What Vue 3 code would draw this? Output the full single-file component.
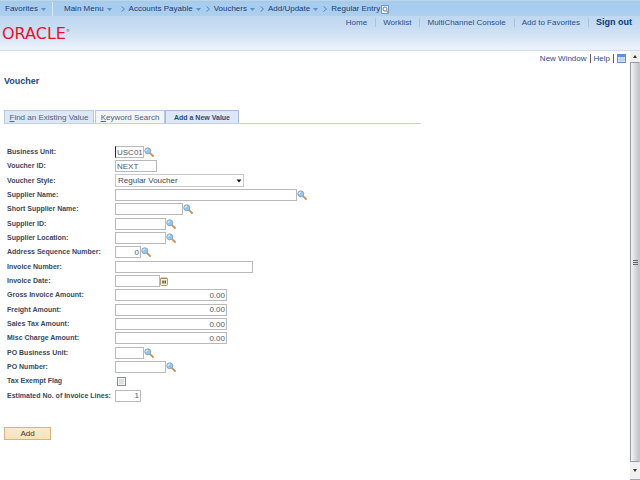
<script setup>
import { ref } from 'vue'

const crumbs = [
  { text: 'Accounts Payable', menu: true },
  { text: 'Vouchers', menu: true },
  { text: 'Add/Update', menu: true },
  { text: 'Regular Entry', menu: false },
]

const links = ['Home', 'Worklist', 'MultiChannel Console', 'Add to Favorites']

const fields = ref([
  { id: 'business-unit', label: 'Business Unit:', size: 'w-unit', value: 'USC01', lookup: true, caret: true },
  { id: 'voucher-id', label: 'Voucher ID:', size: 'w-voucher', value: 'NEXT' },
  { id: 'voucher-style', label: 'Voucher Style:', kind: 'select', value: 'Regular Voucher' },
  { id: 'supplier-name', label: 'Supplier Name:', size: 'w-name', value: '', lookup: true },
  { id: 'short-name', label: 'Short Supplier Name:', size: 'w-short', value: '', lookup: true },
  { id: 'supplier-id', label: 'Supplier ID:', size: 'w-code', value: '', lookup: true },
  { id: 'supplier-location', label: 'Supplier Location:', size: 'w-code', value: '', lookup: true },
  { id: 'address-seq', label: 'Address Sequence Number:', size: 'w-count', value: '0', right: true, lookup: true },
  { id: 'invoice-number', label: 'Invoice Number:', size: 'w-invoice', value: '' },
  { id: 'invoice-date', label: 'Invoice Date:', size: 'w-date', value: '', calendar: true },
  { id: 'gross', label: 'Gross Invoice Amount:', size: 'w-amount', value: '0.00', right: true },
  { id: 'freight', label: 'Freight Amount:', size: 'w-amount', value: '0.00', right: true },
  { id: 'sales-tax', label: 'Sales Tax Amount:', size: 'w-amount', value: '0.00', right: true },
  { id: 'misc', label: 'Misc Charge Amount:', size: 'w-amount', value: '0.00', right: true },
  { id: 'po-unit', label: 'PO Business Unit:', size: 'w-unit', value: '', lookup: true },
  { id: 'po-number', label: 'PO Number:', size: 'w-code', value: '', lookup: true },
  { id: 'tax-exempt', label: 'Tax Exempt Flag', kind: 'checkbox', value: false },
  { id: 'line-count', label: 'Estimated No. of Invoice Lines:', size: 'w-count', value: '1', right: true },
])
</script>

<template>
  <div class="page">
    <header class="header">
      <nav class="crumbs" aria-label="Breadcrumb">
        <button class="crumb favorites" type="button">
          Favorites
          <svg class="down" viewBox="0 0 5 5"><path d="M0 1h5L2.500 4z" /></svg>
        </button>
        <button class="crumb main-menu" type="button">
          Main Menu
          <svg class="down" viewBox="0 0 5 5"><path d="M0 1h5L2.500 4z" /></svg>
        </button>
        <template v-for="c in crumbs" :key="c.text">
          <svg class="chevron" viewBox="0 0 4 6"><path d="M0.500 0.500L3.500 3L0.500 5.500" /></svg>
          <button class="crumb" :class="{ last: !c.menu }" type="button">
            {{ c.text }}
            <svg v-if="c.menu" class="down" viewBox="0 0 5 5"><path d="M0 1h5L2.500 4z" /></svg>
            <svg v-else class="page-icon" viewBox="0 0 8 9">
              <rect x="0.500" y="0.500" width="7" height="8" fill="#eaf2fc" stroke="#6d9bd3" />
              <circle cx="4" cy="4" r="2" fill="#fff" stroke="#6483ad" />
              <path d="M5.500 5.500L7.500 8" stroke="#d79a24" stroke-width="1.500" />
            </svg>
          </button>
        </template>
      </nav>
      <div class="brand-row">
        <div class="brand">ORACLE<span class="mark">®</span></div>
        <nav class="links" aria-label="Account">
          <a v-for="l in links" :key="l" href="#">{{ l }}</a>
          <a class="sign-out" href="#">Sign out</a>
        </nav>
      </div>
    </header>

    <div class="body">
      <main class="content">
        <div class="tools">
          <a href="#">New Window</a><i class="bar"></i>
          <a href="#">Help</a><i class="bar"></i>
          <button class="icon-button" type="button" aria-label="Personalize page">
            <svg class="grid-icon" viewBox="0 0 9 9">
              <rect x="0.500" y="0.500" width="8" height="8" fill="#d5e4fb" stroke="#6591dc" />
              <path d="M0 0h9v3H0z" fill="#5f8fe2" />
              <path d="M1 5.500h7M3.500 3v5M6 3v5" stroke="#b4cbf2" />
            </svg>
          </button>
        </div>

        <h1>Voucher</h1>

        <div class="tabs">
          <button class="tab first" type="button"><span><u>F</u>ind an Existing Value</span></button>
          <button class="tab plain" type="button"><span><u>K</u>eyword Search</span></button>
          <button class="tab active" type="button">Add a New Value</button>
        </div>

        <form @submit.prevent>
          <div class="fields">
            <div v-for="f in fields" :key="f.id" class="row">
              <label :for="f.id">{{ f.label }}</label>
              <div v-if="f.kind === 'select'" class="select-box">
                <select :id="f.id" v-model="f.value"><option>Regular Voucher</option></select>
                <svg class="arrow" viewBox="0 0 6 4"><path d="M0.500 0.500h5L3 3.500z" /></svg>
              </div>
              <input v-else-if="f.kind === 'checkbox'" :id="f.id" v-model="f.value" type="checkbox" />
              <input
                v-else
                :id="f.id"
                v-model="f.value"
                type="text"
                :class="[f.size, { right: f.right, caret: f.caret }]"
              />
              <button v-if="f.lookup" class="icon-button" type="button" :aria-label="'Look up ' + f.label">
                <svg class="lens" viewBox="0 0 10 10">
                  <path d="M5.800 5.800L9 9" stroke="#cf8f55" stroke-width="1.800" stroke-linecap="round" />
                  <circle cx="3.800" cy="3.800" r="3" fill="#8fc8f4" stroke="#93a3ba" />
                  <path d="M2 4a2 2 0 0 1 2-2" stroke="#e6f6ff" fill="none" />
                </svg>
              </button>
              <button v-if="f.calendar" class="icon-button" type="button" aria-label="Choose a date">
                <svg class="calendar" viewBox="0 0 8 9">
                  <rect x="0.500" y="1" width="7" height="7.500" rx="1" fill="#fbf0d0" stroke="#b39a74" />
                  <path d="M1 1.500h6" stroke="#a68a62" />
                  <path d="M3 3.500v3M5.200 3.500v3" stroke="#3c3024" stroke-width="1.200" />
                </svg>
              </button>
            </div>
          </div>
          <button class="add" type="submit">Add</button>
        </form>
      </main>

      <div class="scrollbar" aria-hidden="true">
        <div class="cap"><svg viewBox="0 0 4 3"><path d="M0 3h4L2 0z" /></svg></div>
        <div class="thumb"><i></i><i></i><i></i></div>
        <div class="cap end"><svg viewBox="0 0 4 3"><path d="M0 0h4L2 3z" /></svg></div>
      </div>
    </div>
  </div>
</template>

<style>
body {
  margin: 0;
  background: #fff;
}
</style>

<style scoped>
.page {
  display: flex;
  flex-direction: column;
  min-height: 100vh;
  font-family: "Liberation Sans", Arial, sans-serif;
  font-size: 8px;
  line-height: 10px;
  color: #1f4f8c;
}
.page * {
  box-sizing: border-box;
}
button,
input,
select {
  margin: 0;
  font: inherit;
  color: inherit;
}
button {
  display: flex;
  align-items: center;
  padding: 0;
  border: 0;
  background: none;
  white-space: nowrap;
}
a {
  color: inherit;
  text-decoration: none;
}
svg {
  display: block;
  flex: none;
  fill: none;
}
.header {
  height: 51px;
  background: linear-gradient(#bfd8f0 16px, #c9ddf2 28px, #d8e5f6 38px, #e6f0fa 46px, #eaf2fb);
  border-bottom: 1px solid #d4dce9;
}
.crumbs {
  display: flex;
  align-items: center;
  height: 16px;
  padding-top: 1px;
  color: #1e3c69;
  background: linear-gradient(#a9cae3, #a7cdf0 3px, #a9cdf1 10px, #b0d0e8);
  border-top: 1px solid #b9d6ec;
}
.crumb {
  gap: 3px;
  height: 14px;
}
.favorites {
  width: 53px;
  padding-left: 5px;
  border-right: 1px solid #d6e7f7;
}
.main-menu {
  padding: 0 4px 0 11px;
}
.last {
  gap: 1px;
}
.down {
  width: 5px;
  height: 5px;
  fill: #5c8fc4;
}
.chevron {
  width: 4px;
  height: 6px;
  margin: 0 4px 0 5px;
  stroke: #5c85b2;
}
.page-icon {
  width: 8px;
  height: 9px;
}
.brand-row {
  display: flex;
  justify-content: space-between;
  align-items: flex-start;
}
.brand {
  display: flex;
  align-items: flex-start;
  padding: 10px 0 0 2px;
  font-family: "DejaVu Sans", sans-serif;
  font-size: 16px;
  line-height: 16px;
  color: #e8112d;
}
.mark {
  font-size: 4px;
  line-height: 10px;
}
.links {
  display: flex;
  padding: 1px 8px 0 0;
}
.links a {
  padding-right: 8px;
  margin-right: 7px;
  border-right: 1px solid #a9c3df;
  line-height: 9px;
  margin-top: 1px;
}
.links .sign-out {
  margin-right: 0;
  padding-right: 0;
  border: 0;
  font-size: 9px;
  font-weight: bold;
  color: #003c80;
}
.body {
  display: flex;
  flex: 1;
}
.content {
  flex: 1;
  padding: 2px 4px 0;
}
.tools {
  display: flex;
  justify-content: flex-end;
  align-items: center;
  gap: 3px;
  height: 11px;
}
.bar {
  width: 1px;
  height: 9px;
  background: #6b5a55;
}
.grid-icon {
  width: 9px;
  height: 9px;
}
h1 {
  margin: 12px 0 0;
  font-size: 9px;
  line-height: 11px;
  color: #27477a;
}
.tabs {
  display: flex;
  width: 67%;
  margin-top: 23px;
  border-bottom: 1px solid #c3cfe2;
}
.tab {
  justify-content: center;
  height: 13px;
  padding-top: 1px;
  border: 1px solid #b7c8df;
  border-bottom: 0;
  background: #dce8f5;
  color: #4d6184;
}
.tab.first {
  width: 90px;
  margin-right: 1px;
}
.tab.plain {
  width: 70px;
  background: #f3f4f6;
}
.tab.active {
  width: 74px;
  font-size: 7px;
  font-weight: bold;
  background: #dce8f7;
  border-color: #a5b9d8;
  color: #2d4a7a;
}
.fields {
  display: grid;
  grid-auto-rows: 1fr;
  height: 258px;
  margin-top: 21px;
}
.row {
  display: flex;
  align-items: center;
  min-height: 0;
}
label {
  width: 111px;
  padding-left: 3px;
  font-size: 7px;
  font-weight: bold;
  white-space: nowrap;
  color: #3b475d;
}
input[type="text"] {
  height: 12px;
  padding: 0 1px;
  border: 1px solid #b9b9b9;
  border-radius: 0;
  background: #fff;
  line-height: 10px;
  color: #4d586e;
}
input.right {
  text-align: right;
}
input.caret {
  border-left-color: #223;
}
.w-unit { width: 29px; }
.w-voucher { width: 42px; }
.w-name { width: 182px; }
.w-short { width: 68px; }
.w-code { width: 51px; }
.w-count { width: 26px; }
.w-invoice { width: 138px; }
.w-date { width: 45px; }
.w-amount { width: 112px; }
.select-box {
  position: relative;
  width: 129px;
}
select {
  display: block;
  width: 100%;
  height: 13px;
  padding: 0 2px;
  appearance: none;
  border: 1px solid #c5c8cc;
  border-radius: 0;
  background: #fff;
  line-height: 11px;
  color: #3d4658;
}
.arrow {
  position: absolute;
  top: 5px;
  right: 2px;
  width: 6px;
  height: 4px;
  fill: #111;
  pointer-events: none;
}
input[type="checkbox"] {
  width: 9px;
  height: 9px;
  margin-left: 2px;
  appearance: none;
  border: 1px solid #8b8e93;
  background: #dcdfe3;
  box-shadow: inset 0 0 0 1px #f4f4f4;
}
.lens {
  width: 10px;
  height: 10px;
}
.calendar {
  width: 8px;
  height: 9px;
}
.add {
  justify-content: center;
  width: 47px;
  height: 13px;
  margin-top: 24px;
  padding-top: 1px;
  border: 1px solid #dfb07f;
  background: linear-gradient(#fbe9d2, #f7e3b8);
  color: #333;
}
.scrollbar {
  display: flex;
  flex-direction: column;
  width: 10px;
  border-bottom: 1px solid #9aa5b8;
  background: #f0f0f0;
}
.cap {
  display: flex;
  align-items: center;
  justify-content: center;
  height: 11px;
}
.cap.end {
  height: 17px;
}
.cap svg {
  width: 4px;
  height: 3px;
  fill: #333;
}
.thumb {
  display: flex;
  flex: 1;
  flex-direction: column;
  align-items: center;
  justify-content: center;
  gap: 1px;
  border: 1px solid #969ba1;
  border-right-color: #c5c8cc;
  border-radius: 1px;
  background: linear-gradient(90deg, #f3f5f6, #d9dcdf 50%, #bfc3c8);
}
.thumb i {
  width: 5px;
  height: 1px;
  background: #62666c;
}
</style>
